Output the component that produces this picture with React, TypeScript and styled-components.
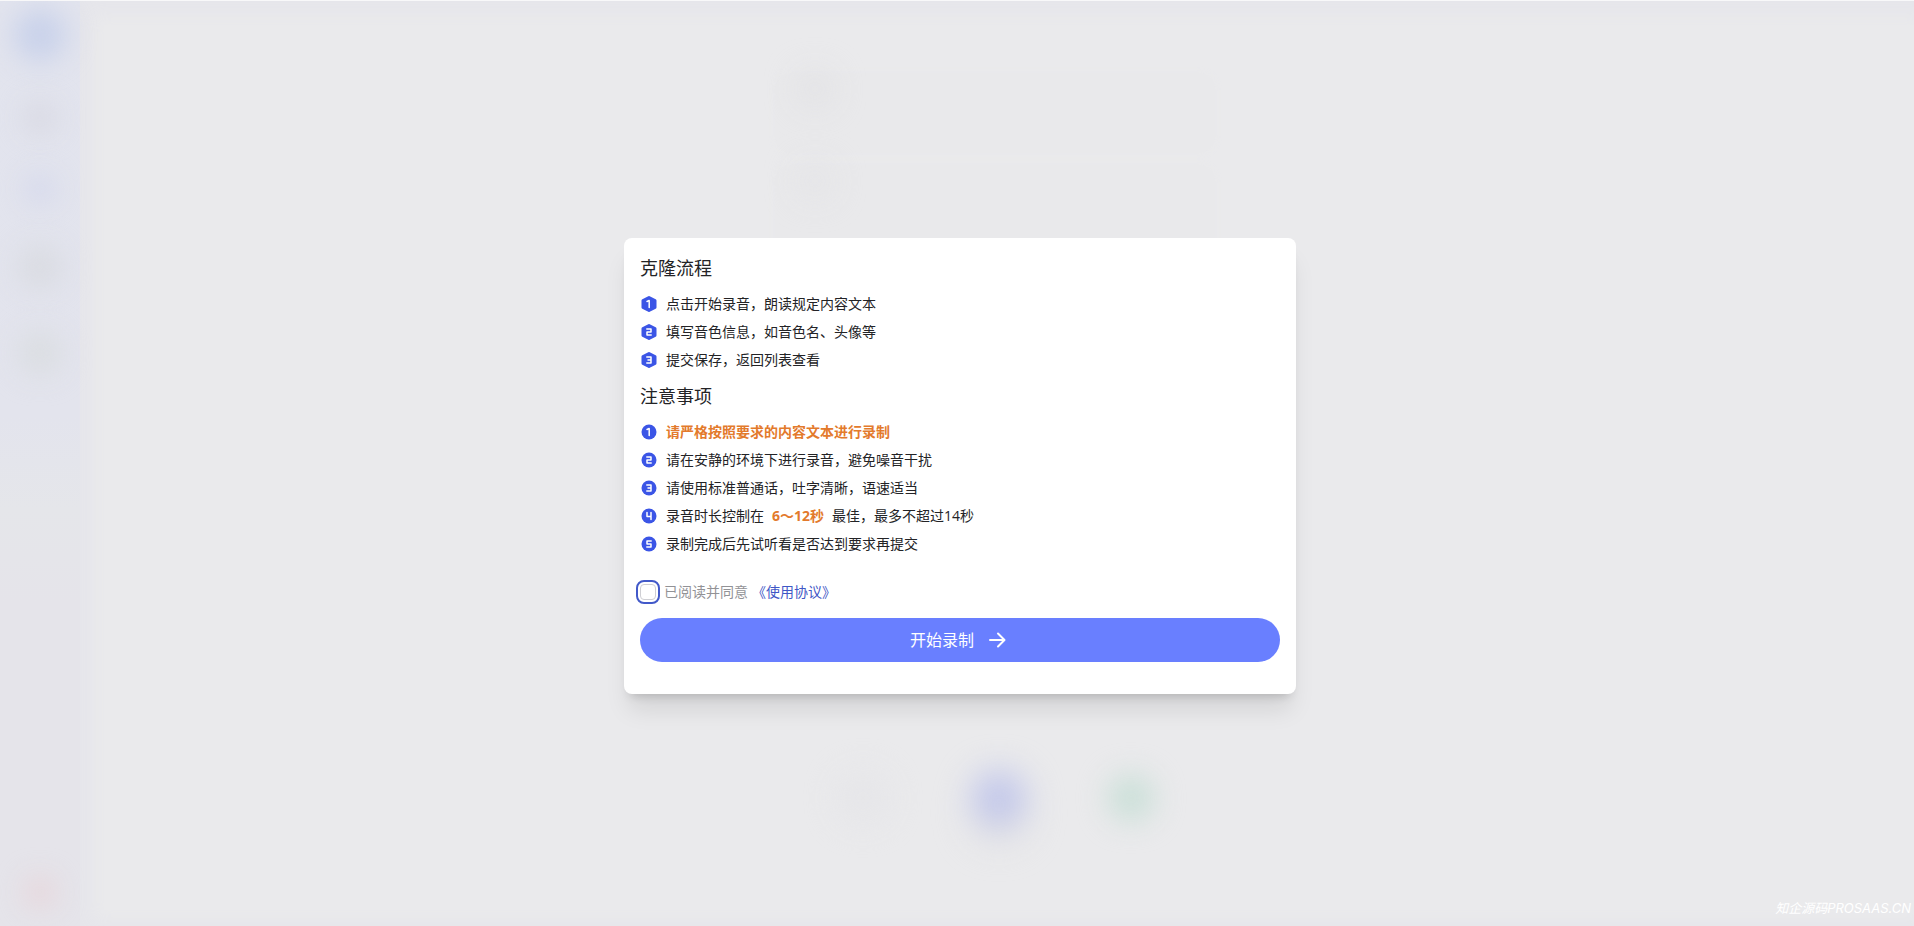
import React, { useState } from "react";
import styled, { createGlobalStyle } from "styled-components";

const GlobalStyle = createGlobalStyle`
  *, *::before, *::after { box-sizing: border-box; }
  html, body, #root { height: 100%; }
  body {
    margin: 0;
    background: #eaeaec;
    color: #232326;
    font-family: "Open Sans", "Noto Sans CJK SC", sans-serif;
    font-size: 14px;
    line-height: 28px;
  }
`;

const Screen = styled.div`
  position: relative;
  display: grid;
  min-height: 100vh;
  overflow: hidden;
  border-top: 1px solid #f8f8f9;
`;

const Backdrop = styled.div`
  grid-area: 1 / 1;
  display: flex;
  background: #e6e6eb;
`;

const Sidebar = styled.div`
  display: flex;
  flex-direction: column;
  align-items: center;
  width: 80px;
  padding: 8px 0 20px;
  gap: 42px;
  background: linear-gradient(#e2e4ee, #e3e4ed 45%, #e5e6ea 55%, #e5e4ea 65%);
`;

const Blob = styled.div<{ $color: string; $size: number; $blur?: number }>`
  flex: none;
  width: ${(p) => p.$size}px;
  height: ${(p) => p.$size}px;
  border-radius: 50%;
  background: ${(p) => p.$color};
  filter: blur(${(p) => p.$blur ?? 14}px);
`;

const LastBlob = styled(Blob)`
  margin-top: auto;
`;

const Workspace = styled.div`
  flex: 1;
  display: flex;
  flex-direction: column;
  align-items: center;
  justify-content: space-between;
  padding: 48px 28px 84px 0;
  margin: 24px 0 16px 24px;
  background: #eaeaec;
  box-shadow: 0 0 16px 10px #eaeaec;
`;

const Panels = styled.div`
  display: flex;
  flex-direction: column;
  gap: 12px;
  width: 440px;
`;

const Panel = styled.div<{ $height: number }>`
  height: ${(p) => p.$height}px;
  padding-left: 24px;
  border-radius: 16px;
  background: #e9e9eb;
  box-shadow: 0 0 8px #e9e9eb;
`;

const Recorder = styled.div`
  display: flex;
  align-items: center;
  gap: 80px;
`;

const RecordBlob = styled(Blob)`
  box-shadow: 0 16px 12px #dedee2;
`;

const Overlay = styled.main`
  grid-area: 1 / 1;
  z-index: 1;
  display: flex;
  align-items: center;
  justify-content: center;
  padding: 20px 16px 16px 22px;
`;

const Card = styled.section`
  width: 100%;
  max-width: 672px;
  padding: 16px 16px 32px;
  border-radius: 8px;
  background: #fff;
  box-shadow: 0 20px 25px -5px rgba(0, 0, 0, 0.1), 0 8px 10px -6px rgba(0, 0, 0, 0.16);
`;

const Title = styled.h2`
  margin: 0;
  font-size: 18px;
  font-weight: 400;
  line-height: 28px;
`;

const List = styled.ol`
  margin: 0;
  padding: 8px 0;
  list-style: none;
`;

const Item = styled.li`
  display: flex;
  align-items: center;
  gap: 8px;
`;

const Highlight = styled.strong<{ $spaced?: boolean }>`
  margin: 0 ${(p) => (p.$spaced ? 8 : 0)}px;
  color: #e37a2c;
  font-weight: 700;
`;

const Agreement = styled.div`
  display: flex;
  align-items: center;
  gap: 4px;
  margin: 12px 0;
`;

const AgreementLabel = styled.label`
  display: flex;
  align-items: center;
  gap: 8px;
  color: #929296;
`;

const Checkbox = styled.input`
  appearance: none;
  width: 16px;
  height: 16px;
  margin: 0;
  border: 1px solid #cfcfd4;
  border-radius: 4px;
  background: #fff;
  outline: 2px solid #4259c9;
  outline-offset: 2px;

  &:checked {
    background: #697fff;
  }
`;

const AgreementLink = styled.a`
  color: #3f57c6;
  text-decoration: none;
`;

const StartButton = styled.button`
  display: flex;
  align-items: center;
  justify-content: center;
  gap: 12px;
  width: 100%;
  height: 44px;
  border: 0;
  border-radius: 22px;
  background: #697fff;
  color: #fff;
  font: inherit;
  font-size: 16px;
  cursor: pointer;
`;

const Watermark = styled.div`
  position: absolute;
  right: 3px;
  bottom: 8px;
  z-index: 2;
  color: #fff;
  font-family: Inter, "Noto Sans CJK SC", sans-serif;
  font-size: 13px;
  font-style: italic;
  line-height: 20px;
`;

const digits = [
  "M7 6.5 9.2 5.5V12.5",
  "M6.8 6H11V9H7V12H11.2",
  "M6.8 6H11V12H6.8M8 9H11",
  "M7 5.5V9.5H11M11 5.5V12.5",
  "M11.2 6H7V9H11V12H6.8",
];

function NumberIcon({ value, hexagon }: { value: number; hexagon?: boolean }) {
  return (
    <svg width="18" height="18" viewBox="0 0 18 18" aria-hidden="true">
      {hexagon ? (
        <path
          d="M9 2.5 15 5.5V12.5L9 15.5 3 12.5V5.5Z"
          fill="#3b55e6"
          stroke="#3b55e6"
          strokeWidth="3"
          strokeLinejoin="round"
        />
      ) : (
        <circle cx="9" cy="9" r="7.5" fill="#3b55e6" />
      )}
      <path
        d={digits[value - 1]}
        fill="none"
        stroke="#fff"
        strokeWidth="1.5"
        strokeLinecap="round"
        strokeLinejoin="round"
      />
    </svg>
  );
}

const steps = ["点击开始录音，朗读规定内容文本", "填写音色信息，如音色名、头像等", "提交保存，返回列表查看"];

const notes: React.ReactNode[] = [
  <Highlight>请严格按照要求的内容文本进行录制</Highlight>,
  "请在安静的环境下进行录音，避免噪音干扰",
  "请使用标准普通话，吐字清晰，语速适当",
  <>
    录音时长控制在<Highlight $spaced>6～12秒</Highlight>最佳，最多不超过14秒
  </>,
  "录制完成后先试听看是否达到要求再提交",
];

export default function App() {
  const [agreed, setAgreed] = useState(false);

  return (
    <>
      <GlobalStyle />
      <Screen>
        <Backdrop aria-hidden="true">
          <Sidebar>
            <Blob $color="#c8d1ea" $size={52} />
            <Blob $color="#d6d6e0" $size={30} />
            <Blob $color="#d2d6ec" $size={28} />
            <Blob $color="#d9dbe1" $size={44} />
            <Blob $color="#dadde1" $size={44} />
            <LastBlob $color="#e8d2d7" $size={28} $blur={14} />
          </Sidebar>
          <Workspace>
            <Panels>
              <Panel $height={80}>
                <Blob $color="#e0e0e3" $size={32} $blur={16} />
              </Panel>
              <Panel $height={160}>
                <Blob $color="#e3e3e6" $size={32} $blur={16} />
              </Panel>
            </Panels>
            <Recorder>
              <Blob $color="#e6e6e9" $size={56} />
              <RecordBlob $color="#c3c8ea" $size={56} $blur={16} />
              <Blob $color="#cce0d9" $size={48} $blur={14} />
            </Recorder>
          </Workspace>
        </Backdrop>
        <Overlay>
          <Card role="dialog" aria-labelledby="clone-title">
            <Title id="clone-title">克隆流程</Title>
            <List>
              {steps.map((text, i) => (
                <Item key={i}>
                  <NumberIcon value={i + 1} hexagon />
                  <span>{text}</span>
                </Item>
              ))}
            </List>
            <Title>注意事项</Title>
            <List>
              {notes.map((text, i) => (
                <Item key={i}>
                  <NumberIcon value={i + 1} />
                  <span>{text}</span>
                </Item>
              ))}
            </List>
            <Agreement>
              <AgreementLabel>
                <Checkbox type="checkbox" checked={agreed} onChange={(e) => setAgreed(e.target.checked)} />
                已阅读并同意
              </AgreementLabel>
              <AgreementLink href="#agreement">《使用协议》</AgreementLink>
            </Agreement>
            <StartButton type="button">
              开始录制
              <svg width="24" height="24" viewBox="0 0 24 24" fill="none" stroke="currentColor" strokeWidth="2" aria-hidden="true">
                <path d="M4 12H18M12 5.5l6.5 6.5L12 18.5" strokeLinecap="round" strokeLinejoin="round" />
              </svg>
            </StartButton>
          </Card>
        </Overlay>
        <Watermark>知企源码PROSAAS.CN</Watermark>
      </Screen>
    </>
  );
}
